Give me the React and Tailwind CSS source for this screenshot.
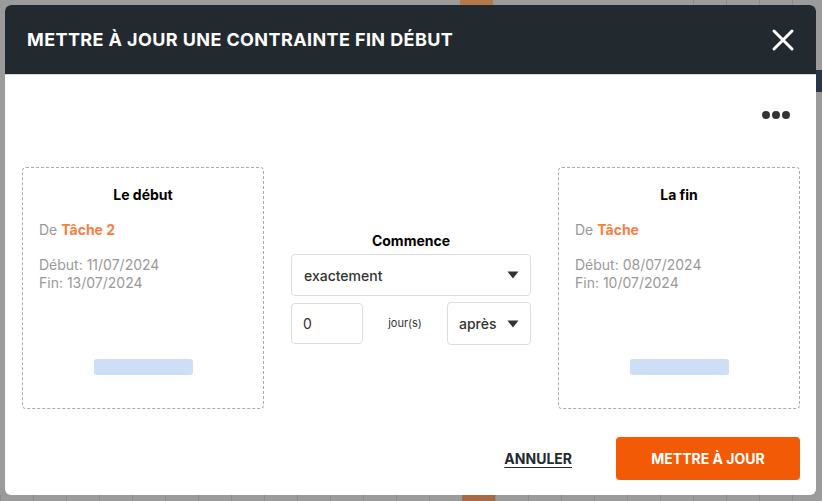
const days = ["Lun", "Mar", "Mer", "Jeu", "Ven", "Sam", "Dim", "Lun", "Mar", "Mer", "Jeu", "Ven", "Sam", "Dim"];

const Caret = function () {
  return (
    <svg width="12" height="8" viewBox="0 0 12 8" className="shrink-0">
      <path d="M0.5 0.5 L11.5 0.5 L6 7.5 Z" fill="#333" />
    </svg>
  );
};

const TaskCard = function ({ title, name, start, end }) {
  return (
    <div className="flex h-[242px] w-[242px] shrink-0 flex-col rounded-[4px] border border-dashed border-[#aaaaaa] px-4 pt-[17px]">
      <h3 className="text-center text-[14px] font-bold leading-[20px] text-black">{title}</h3>
      <p className="mt-[15px] text-[14px] leading-[20px] text-[#999999]">
        De <span className="font-bold text-[#f5813f]">{name}</span>
      </p>
      <p className="mt-[16px] text-[14px] leading-[18px] text-[#999999]">
        Début: {start}
        <br />
        Fin: {end}
      </p>
      <div className="mx-auto mt-[67px] h-[16px] w-[99px] rounded-[3px] bg-[#cddff6]" />
    </div>
  );
};

const App = function () {
  return (
    <div
      className="relative h-[501px] w-[822px] overflow-hidden bg-[#9b9b9b]"
      style={{ fontFamily: "Inter, 'Open Sans', sans-serif" }}
    >
      {/* gantt behind the overlay */}
      <div className="absolute left-[693px] top-0 flex h-[6px]">
        {days.map((d, i) => (
          <div key={i} className="w-[33px] border-l border-[#8a8a8a]" />
        ))}
      </div>
      <div className="absolute left-[460px] top-0 h-[6px] w-[33px] bg-[#b07a4c]" />
      <div className="absolute bottom-0 left-0 flex h-[6px]">
        {Array.from({ length: 25 }).map((_, i) => (
          <div key={i} className="w-[33px] border-l border-[#8a8a8a]" />
        ))}
      </div>
      <div className="absolute bottom-0 left-[462px] h-[6px] w-[33px] bg-[#a86a45]" />
      <div className="absolute right-0 top-[70px] h-[22px] w-[6px] bg-[#2b3548]" />

      <div className="absolute left-[5px] top-[5px] flex h-[490px] w-[811px] flex-col overflow-hidden rounded-[6px] bg-white">
        <div className="flex h-[70px] shrink-0 items-center justify-between border-b border-[#d5d5d5] bg-[#22292f] pl-[22px] pr-[20px]">
          <h2 className="text-[18px] font-bold uppercase tracking-[0.4px] text-white">
            Mettre à jour une contrainte fin début
          </h2>
          <svg width="24" height="24" viewBox="0 0 24 24" className="mr-[1px]">
            <path d="M3 3 L21 21 M21 3 L3 21" stroke="white" strokeWidth="3" strokeLinecap="round" />
          </svg>
        </div>

        <div className="flex flex-1 flex-col pl-[17px] pr-[16px]">
          <div className="flex justify-end pr-[10px] pt-[36px]">
            <div className="flex gap-[2px]">
              <span className="h-[8px] w-[8px] rounded-full bg-[#333333]" />
              <span className="h-[8px] w-[8px] rounded-full bg-[#333333]" />
              <span className="h-[8px] w-[8px] rounded-full bg-[#333333]" />
            </div>
          </div>

          <div className="mt-[48px] flex items-center gap-[27px]">
            <TaskCard title="Le début" name="Tâche 2" start="11/07/2024" end="13/07/2024" />

            <div className="flex w-[240px] shrink-0 flex-col">
              <p className="text-center text-[14px] font-bold leading-[20px] text-black">Commence</p>
              <div className="mt-[3px] flex h-[42px] items-center justify-between rounded-[4px] border border-[#dddddd] pl-[12px] pr-[11px]">
                <span className="text-[14px] font-medium text-[#333333]">exactement</span>
                <Caret />
              </div>
              <div className="mt-[6px] flex items-center">
                <div className="flex h-[41px] w-[72px] items-center rounded-[4px] border border-[#dddddd] pl-[11px]">
                  <span className="text-[14px] text-[#333333]">0</span>
                </div>
                <span className="flex-1 text-center text-[11px] text-[#333333]">jour(s)</span>
                <div className="flex h-[43px] w-[84px] items-center justify-between rounded-[4px] border border-[#dddddd] pl-[11px] pr-[11px]">
                  <span className="text-[14px] font-medium text-[#333333]">après</span>
                  <Caret />
                </div>
              </div>
            </div>

            <TaskCard title="La fin" name="Tâche" start="08/07/2024" end="10/07/2024" />
          </div>

          <div className="mt-[28px] flex items-center justify-end gap-[44px]">
            <span className="text-[14px] font-bold text-[#22292f] underline underline-offset-[3px]">ANNULER</span>
            <button className="flex h-[43px] w-[184px] items-center justify-center rounded-[4px] bg-[#f25a05] text-[14px] font-bold text-white">
              METTRE À JOUR
            </button>
          </div>
        </div>
      </div>
    </div>
  );
};

export default App;
